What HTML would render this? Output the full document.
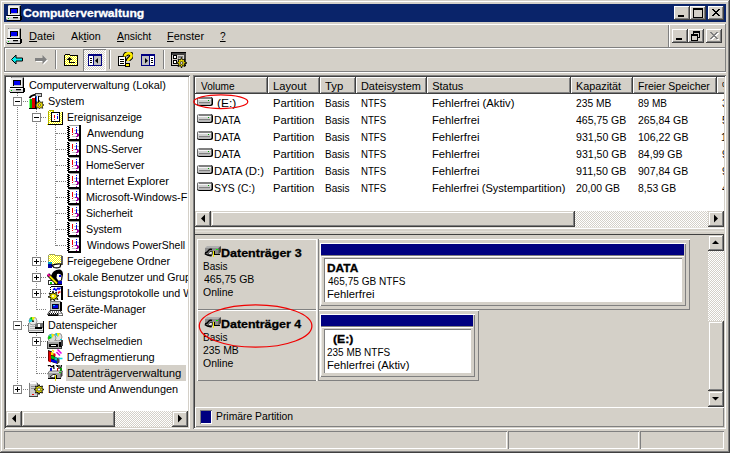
<!DOCTYPE html>
<html lang="de"><head><meta charset="utf-8"><title>Computerverwaltung</title>
<style>
html,body{margin:0;padding:0}
body{width:730px;height:453px;overflow:hidden;position:relative;background:#d4d0c8;font-family:"Liberation Sans",sans-serif;font-size:11px;line-height:13px;color:#000}
div,svg,.t{position:absolute;display:block}
.t{white-space:pre;height:13px;transform-origin:0 0}
u{text-decoration:underline;text-underline-offset:1px}
</style></head>
<body>
<div style="left:0px;top:0px;width:730px;height:453px;background:#d4d0c8"></div>
<svg style="left:0;top:0" width="0" height="0"><defs><pattern id="dy" width="2" height="2" patternUnits="userSpaceOnUse"><rect width="2" height="2" fill="#ffff00"/><rect width="1" height="1" fill="#fff"/><rect x="1" y="1" width="1" height="1" fill="#fff"/></pattern></defs></svg>
<div style="left:0px;top:0px;width:729px;height:1px;background:#d4d0c8"></div>
<div style="left:0px;top:0px;width:1px;height:452px;background:#d4d0c8"></div>
<div style="left:1px;top:1px;width:727px;height:1px;background:#fff"></div>
<div style="left:1px;top:1px;width:1px;height:450px;background:#fff"></div>
<div style="left:729px;top:0px;width:1px;height:453px;background:#404040"></div>
<div style="left:0px;top:452px;width:730px;height:1px;background:#404040"></div>
<div style="left:728px;top:1px;width:1px;height:451px;background:#808080"></div>
<div style="left:1px;top:451px;width:728px;height:1px;background:#808080"></div>
<div style="left:4px;top:4px;width:722px;height:18px;background:#0a246a"></div>
<svg style="left:6px;top:5px" width="16" height="16" viewBox="0 0 16 16" shape-rendering="crispEdges"><rect x="2" y="0" width="13" height="10" fill="#808080"/><rect x="2" y="1" width="11" height="9" fill="#f0f0f0"/>
<rect x="13" y="1" width="1" height="9" fill="#a0a0a0"/><rect x="14" y="1" width="1" height="10" fill="#000"/><rect x="3" y="0" width="11" height="1" fill="#c0c0c0"/>
<rect x="4" y="3" width="8" height="6" fill="#000"/><rect x="5" y="4" width="6" height="4" fill="#0000f0"/><rect x="5" y="8" width="7" height="1" fill="#c0c0c0"/>
<rect x="1" y="10" width="14" height="1" fill="#000"/><rect x="0" y="11" width="14" height="4" fill="#d8d8d8"/><rect x="0" y="11" width="14" height="1" fill="#fff"/>
<rect x="14" y="11" width="2" height="4" fill="#000"/><rect x="1" y="15" width="14" height="1" fill="#000"/><rect x="0" y="14" width="1" height="1" fill="#808080"/>
<rect x="2" y="13" width="1" height="1" fill="#00d000"/><rect x="7" y="12" width="5" height="1" fill="#000"/><rect x="7" y="13" width="5" height="1" fill="#a0a0a0"/></svg>
<span class="t" style="left:22.50px;top:7px;font-weight:bold;-webkit-text-stroke:.3px;color:#fff;transform:scaleX(1.102);">Computerverwaltung</span>
<div style="left:674px;top:6px;width:16px;height:14px;background:#d4d0c8;box-shadow:inset -1px -1px 0 #404040,inset 1px 1px 0 #fff,inset -2px -2px 0 #808080,inset 2px 2px 0 #d4d0c8"></div>
<svg style="left:674px;top:6px" width="16" height="14" shape-rendering="crispEdges"><rect x="4" y="9" width="6" height="2" fill="#000"/></svg>
<div style="left:690px;top:6px;width:16px;height:14px;background:#d4d0c8;box-shadow:inset -1px -1px 0 #404040,inset 1px 1px 0 #fff,inset -2px -2px 0 #808080,inset 2px 2px 0 #d4d0c8"></div>
<svg style="left:690px;top:6px" width="16" height="14" shape-rendering="crispEdges"><rect x="3" y="2" width="9" height="9" fill="none" stroke="#000" stroke-width="1" transform="translate(.5 .5)"/><rect x="3" y="2" width="10" height="2" fill="#000"/></svg>
<div style="left:708px;top:6px;width:16px;height:14px;background:#d4d0c8;box-shadow:inset -1px -1px 0 #404040,inset 1px 1px 0 #fff,inset -2px -2px 0 #808080,inset 2px 2px 0 #d4d0c8"></div>
<svg style="left:708px;top:6px" width="16" height="14" shape-rendering="crispEdges"><rect x="4" y="3" width="2" height="1" fill="#000"/><rect x="10" y="3" width="2" height="1" fill="#000"/><rect x="5" y="4" width="2" height="1" fill="#000"/><rect x="9" y="4" width="2" height="1" fill="#000"/><rect x="6" y="5" width="2" height="1" fill="#000"/><rect x="8" y="5" width="2" height="1" fill="#000"/><rect x="7" y="6" width="2" height="1" fill="#000"/><rect x="7" y="6" width="2" height="1" fill="#000"/><rect x="8" y="7" width="2" height="1" fill="#000"/><rect x="6" y="7" width="2" height="1" fill="#000"/><rect x="9" y="8" width="2" height="1" fill="#000"/><rect x="5" y="8" width="2" height="1" fill="#000"/><rect x="10" y="9" width="2" height="1" fill="#000"/><rect x="4" y="9" width="2" height="1" fill="#000"/></svg>
<div style="left:4px;top:24px;width:722px;height:1px;background:#fff"></div>
<div style="left:4px;top:24px;width:1px;height:23px;background:#fff"></div>
<div style="left:4px;top:47px;width:722px;height:1px;background:#808080"></div>
<div style="left:668px;top:25px;width:1px;height:22px;background:#808080"></div>
<div style="left:669px;top:25px;width:1px;height:22px;background:#fff"></div>
<div style="left:725px;top:24px;width:1px;height:23px;background:#808080"></div>
<svg style="left:6px;top:28px" width="16" height="16" viewBox="0 0 16 16" shape-rendering="crispEdges"><rect x="2" y="0" width="13" height="10" fill="#808080"/><rect x="2" y="1" width="11" height="9" fill="#f0f0f0"/>
<rect x="13" y="1" width="1" height="9" fill="#a0a0a0"/><rect x="14" y="1" width="1" height="10" fill="#000"/><rect x="3" y="0" width="11" height="1" fill="#c0c0c0"/>
<rect x="4" y="3" width="8" height="6" fill="#000"/><rect x="5" y="4" width="6" height="4" fill="#0000f0"/><rect x="5" y="8" width="7" height="1" fill="#c0c0c0"/>
<rect x="1" y="10" width="14" height="1" fill="#000"/><rect x="0" y="11" width="14" height="4" fill="#d8d8d8"/><rect x="0" y="11" width="14" height="1" fill="#fff"/>
<rect x="14" y="11" width="2" height="4" fill="#000"/><rect x="1" y="15" width="14" height="1" fill="#000"/><rect x="0" y="14" width="1" height="1" fill="#808080"/>
<rect x="2" y="13" width="1" height="1" fill="#00d000"/><rect x="7" y="12" width="5" height="1" fill="#000"/><rect x="7" y="13" width="5" height="1" fill="#a0a0a0"/></svg>
<span class="t" style="left:29.10px;top:30px;"><u>D</u>atei</span>
<span class="t" style="left:70.95px;top:30px;transform:scaleX(0.973);">Ak<u>t</u>ion</span>
<span class="t" style="left:116.95px;top:30px;transform:scaleX(0.946);"><u>A</u>nsicht</span>
<span class="t" style="left:167.11px;top:30px;transform:scaleX(0.993);"><u>F</u>enster</span>
<span class="t" style="left:220.09px;top:30px;transform:scaleX(0.914);"><u>?</u></span>
<div style="left:672px;top:29px;width:16px;height:14px;background:#d4d0c8;box-shadow:inset -1px -1px 0 #404040,inset 1px 1px 0 #fff,inset -2px -2px 0 #808080,inset 2px 2px 0 #d4d0c8"></div>
<svg style="left:672px;top:29px" width="16" height="14" shape-rendering="crispEdges"><rect x="4" y="9" width="6" height="2" fill="#000"/></svg>
<div style="left:688px;top:29px;width:16px;height:14px;background:#d4d0c8;box-shadow:inset -1px -1px 0 #404040,inset 1px 1px 0 #fff,inset -2px -2px 0 #808080,inset 2px 2px 0 #d4d0c8"></div>
<svg style="left:688px;top:29px" width="16" height="14" shape-rendering="crispEdges"><rect x="5" y="2" width="6" height="6" fill="none" stroke="#000" transform="translate(.5 .5)"/><rect x="5" y="2" width="7" height="2" fill="#000"/><rect x="3" y="5" width="6" height="6" fill="#d4d0c8" stroke="#000" transform="translate(.5 .5)"/><rect x="3" y="5" width="7" height="2" fill="#000"/></svg>
<div style="left:706px;top:29px;width:16px;height:14px;background:#d4d0c8;box-shadow:inset -1px -1px 0 #404040,inset 1px 1px 0 #fff,inset -2px -2px 0 #808080,inset 2px 2px 0 #d4d0c8"></div>
<svg style="left:706px;top:29px" width="16" height="14" shape-rendering="crispEdges"><rect transform="translate(1 1)" x="4" y="3" width="2" height="1" fill="#fff"/><rect transform="translate(1 1)" x="10" y="3" width="2" height="1" fill="#fff"/><rect transform="translate(1 1)" x="5" y="4" width="2" height="1" fill="#fff"/><rect transform="translate(1 1)" x="9" y="4" width="2" height="1" fill="#fff"/><rect transform="translate(1 1)" x="6" y="5" width="2" height="1" fill="#fff"/><rect transform="translate(1 1)" x="8" y="5" width="2" height="1" fill="#fff"/><rect transform="translate(1 1)" x="7" y="6" width="2" height="1" fill="#fff"/><rect transform="translate(1 1)" x="7" y="6" width="2" height="1" fill="#fff"/><rect transform="translate(1 1)" x="8" y="7" width="2" height="1" fill="#fff"/><rect transform="translate(1 1)" x="6" y="7" width="2" height="1" fill="#fff"/><rect transform="translate(1 1)" x="9" y="8" width="2" height="1" fill="#fff"/><rect transform="translate(1 1)" x="5" y="8" width="2" height="1" fill="#fff"/><rect transform="translate(1 1)" x="10" y="9" width="2" height="1" fill="#fff"/><rect transform="translate(1 1)" x="4" y="9" width="2" height="1" fill="#fff"/><rect x="4" y="3" width="2" height="1" fill="#808080"/><rect x="10" y="3" width="2" height="1" fill="#808080"/><rect x="5" y="4" width="2" height="1" fill="#808080"/><rect x="9" y="4" width="2" height="1" fill="#808080"/><rect x="6" y="5" width="2" height="1" fill="#808080"/><rect x="8" y="5" width="2" height="1" fill="#808080"/><rect x="7" y="6" width="2" height="1" fill="#808080"/><rect x="7" y="6" width="2" height="1" fill="#808080"/><rect x="8" y="7" width="2" height="1" fill="#808080"/><rect x="6" y="7" width="2" height="1" fill="#808080"/><rect x="9" y="8" width="2" height="1" fill="#808080"/><rect x="5" y="8" width="2" height="1" fill="#808080"/><rect x="10" y="9" width="2" height="1" fill="#808080"/><rect x="4" y="9" width="2" height="1" fill="#808080"/></svg>
<div style="left:4px;top:48px;width:722px;height:1px;background:#fff"></div>
<div style="left:4px;top:48px;width:1px;height:23px;background:#808080"></div>
<div style="left:5px;top:49px;width:1px;height:22px;background:#fff"></div>
<div style="left:4px;top:71px;width:722px;height:1px;background:#808080"></div>
<div style="left:4px;top:72px;width:722px;height:1px;background:#fff"></div>
<div style="left:725px;top:48px;width:1px;height:24px;background:#808080"></div>
<svg style="left:10px;top:52px" width="16" height="16" viewBox="0 0 16 16" shape-rendering="crispEdges"><path d="M1.5 7.500L6 3v3h6.500v3H6v3z" fill="#00f0f0" stroke="#000" stroke-width="1" shape-rendering="auto"/></svg>
<svg style="left:33px;top:52px" width="16" height="16" viewBox="0 0 16 16" shape-rendering="crispEdges"><path d="M15 8.500L10.500 4v3H3v3h7.500v3z" fill="#fff" shape-rendering="auto"/><path d="M14 7.500L9.500 3v3H2v3h7.500v3z" fill="#808080" shape-rendering="auto"/></svg>
<div style="left:55px;top:50px;width:1px;height:19px;background:#808080"></div>
<div style="left:56px;top:50px;width:1px;height:19px;background:#fff"></div>
<svg style="left:63px;top:52px" width="16" height="16" viewBox="0 0 16 16" shape-rendering="crispEdges"><path d="M1.500 13.500v-10l1-1.500h4l1 1.500h7v10z" fill="url(#dy)" stroke="#000"/><path d="M12 10.500H6.500V6" stroke="#000" stroke-width="1.600" fill="none"/><path d="M3.500 8l3-3 3 3z" fill="#000" shape-rendering="auto"/></svg>
<div style="left:83px;top:49px;width:23px;height:22px;background:repeating-conic-gradient(#fff 0% 25%,#d4d0c8 0% 50%) 0 0/2px 2px;box-shadow:inset 1px 1px 0 #808080,inset -1px -1px 0 #fff"></div>
<svg style="left:88px;top:54px" width="14" height="12" viewBox="0 0 14 12" shape-rendering="crispEdges"><rect x="0" y="0" width="14" height="12" fill="#000080"/><rect x="1" y="2" width="4" height="9" fill="#fff"/><rect x="6" y="2" width="7" height="9" fill="#c0c0c0"/><rect x="2" y="4" width="2" height="1" fill="#000"/><rect x="2" y="6" width="2" height="1" fill="#000"/><rect x="2" y="8" width="2" height="1" fill="#000"/><path d="M10 4v5.500l-3-2.750z" fill="#000" shape-rendering="auto"/></svg>
<div style="left:109px;top:50px;width:1px;height:19px;background:#808080"></div>
<div style="left:110px;top:50px;width:1px;height:19px;background:#fff"></div>
<svg style="left:117px;top:52px" width="16" height="16" viewBox="0 0 16 16" shape-rendering="crispEdges"><rect x="1.500" y="4.500" width="7" height="9" fill="#fff" stroke="#000"/><rect x="3" y="7" width="4" height="1" fill="#000"/><rect x="3" y="9" width="4" height="1" fill="#000"/><rect x="3" y="11" width="4" height="1" fill="#000"/>
<path d="M8 4.500c-.5-4 7-4.500 6.500-.5-.3 2.500-3.500 2.500-3.500 5" fill="none" stroke="#000" stroke-width="4.600" shape-rendering="auto"/><path d="M8 4.500c-.5-4 7-4.500 6.500-.5-.3 2.500-3.500 2.500-3.500 5" fill="none" stroke="#ffee00" stroke-width="2.600" shape-rendering="auto"/><rect x="8.500" y="11.500" width="4" height="2.500" fill="#ffee00" stroke="#000"/></svg>
<svg style="left:141px;top:54px" width="14" height="12" viewBox="0 0 14 12" shape-rendering="crispEdges"><rect x="0" y="0" width="14" height="12" fill="#000080"/><rect x="1" y="2" width="7" height="9" fill="#c0c0c0"/><rect x="9" y="2" width="4" height="9" fill="#fff"/><rect x="10" y="4" width="2" height="1" fill="#000"/><rect x="10" y="6" width="2" height="1" fill="#000"/><rect x="10" y="8" width="2" height="1" fill="#000"/><path d="M4 4v5.500l3-2.750z" fill="#000" shape-rendering="auto"/></svg>
<div style="left:163px;top:50px;width:1px;height:19px;background:#808080"></div>
<div style="left:164px;top:50px;width:1px;height:19px;background:#fff"></div>
<svg style="left:171px;top:52px" width="17" height="16" viewBox="0 0 17 16" shape-rendering="crispEdges"><rect x="0.500" y="0.500" width="14" height="13" fill="#d4d0c8" stroke="#000"/><rect x="1" y="1" width="13" height="1.500" fill="#404040"/><rect x="13" y="1" width="1.500" height="12" fill="#404040"/><rect x="2.500" y="3.500" width="3" height="3" fill="#fff" stroke="#000" stroke-width="1"/><rect x="2.500" y="8.500" width="3" height="3" fill="#fff" stroke="#000"/><rect x="7" y="4" width="5" height="2" fill="#808080"/><rect x="7" y="9" width="3" height="1" fill="#404040"/>
<path d="M10.500 5.500l1 2.500 2.500-1-1 2.500 3 1.500-3 1 1 2.500-2.500-1-1 2.500-1-2.500-2.500 1 1-2.500-3-1 3-1.500-1-2.500 2.500 1z" fill="#ffee00" stroke="#000" stroke-width=".9" shape-rendering="auto"/><circle cx="10.500" cy="11" r="1.500" fill="#d4d0c8" stroke="#000" stroke-width=".7" shape-rendering="auto"/></svg>
<div style="left:4px;top:75px;width:186px;height:354px;background:#fff;box-shadow:inset 1px 1px 0 #808080,inset -1px -1px 0 #fff,inset 2px 2px 0 #404040,inset -2px -2px 0 #d4d0c8"></div>
<div style="left:6px;top:77px;width:182px;height:334px;overflow:hidden">
<div style="left:-6px;top:-77px;width:730px;height:453px">
<div style="left:17px;top:90px;width:1px;height:299px;background:repeating-linear-gradient(to bottom,#808080 0 1px,transparent 1px 2px);background-position:0 1px"></div>
<div style="left:36px;top:107px;width:1px;height:203px;background:repeating-linear-gradient(to bottom,#808080 0 1px,transparent 1px 2px);background-position:0 0px"></div>
<div style="left:55px;top:123px;width:1px;height:123px;background:repeating-linear-gradient(to bottom,#808080 0 1px,transparent 1px 2px);background-position:0 0px"></div>
<div style="left:36px;top:331px;width:1px;height:43px;background:repeating-linear-gradient(to bottom,#808080 0 1px,transparent 1px 2px);background-position:0 0px"></div>
<svg style="left:9px;top:77px" width="16" height="16" viewBox="0 0 16 16" shape-rendering="crispEdges"><rect x="2" y="0" width="13" height="10" fill="#808080"/><rect x="2" y="1" width="11" height="9" fill="#f0f0f0"/>
<rect x="13" y="1" width="1" height="9" fill="#a0a0a0"/><rect x="14" y="1" width="1" height="10" fill="#000"/><rect x="3" y="0" width="11" height="1" fill="#c0c0c0"/>
<rect x="4" y="3" width="8" height="6" fill="#000"/><rect x="5" y="4" width="6" height="4" fill="#0000f0"/><rect x="5" y="8" width="7" height="1" fill="#c0c0c0"/>
<rect x="1" y="10" width="14" height="1" fill="#000"/><rect x="0" y="11" width="14" height="4" fill="#d8d8d8"/><rect x="0" y="11" width="14" height="1" fill="#fff"/>
<rect x="14" y="11" width="2" height="4" fill="#000"/><rect x="1" y="15" width="14" height="1" fill="#000"/><rect x="0" y="14" width="1" height="1" fill="#808080"/>
<rect x="2" y="13" width="1" height="1" fill="#00d000"/><rect x="7" y="12" width="5" height="1" fill="#000"/><rect x="7" y="13" width="5" height="1" fill="#a0a0a0"/></svg>
<span class="t" style="left:29.46px;top:79px;transform:scaleX(0.990);">Computerverwaltung (Lokal)</span>
<div style="left:18px;top:101px;width:10px;height:1px;background:repeating-linear-gradient(to right,#808080 0 1px,transparent 1px 2px);background-position:1px 0"></div>
<div style="left:13px;top:97px;width:9px;height:9px;background:#fff;box-shadow:inset 0 0 0 1px #808080"></div>
<div style="left:15px;top:101px;width:5px;height:1px;background:#000"></div>
<svg style="left:28px;top:93px" width="16" height="16" viewBox="0 0 16 16" shape-rendering="crispEdges"><path d="M1.500 5q3-4.500 11-3" stroke="#000" stroke-width="1.800" fill="none" shape-rendering="auto"/><rect x="7.500" y="0.500" width="6" height="3" fill="#d0d0d0" stroke="#404040"/>
<rect x="1" y="6" width="3" height="9" fill="#00b800"/><rect x="1" y="6" width="1" height="9" fill="#80ff80"/><rect x="4" y="5" width="3" height="10" fill="#e00000"/><rect x="7" y="4" width="1" height="11" fill="#000"/>
<rect x="8" y="3" width="2" height="9" fill="#2060ff"/><rect x="9" y="3" width="1" height="6" fill="#fff"/><rect x="10" y="3" width="1" height="8" fill="#000"/><rect x="1" y="15" width="8" height="1" fill="#000"/>
<path d="M11.500 7.500l1 2 2.300-.7-.7 2.200 2 1-2 1 .7 2.300-2.300-.7-1 1.400-1-1.400-2.300.7.700-2.300-2-1 2-1-.7-2.200 2.300.7z" fill="#f0e000" stroke="#000" stroke-width=".7" shape-rendering="auto"/><circle cx="11.500" cy="12" r="1.100" fill="#fff" stroke="#000" stroke-width=".5" shape-rendering="auto"/></svg>
<span class="t" style="left:48.01px;top:95px;transform:scaleX(0.987);">System</span>
<div style="left:37px;top:117px;width:10px;height:1px;background:repeating-linear-gradient(to right,#808080 0 1px,transparent 1px 2px);background-position:0px 0"></div>
<div style="left:32px;top:113px;width:9px;height:9px;background:#fff;box-shadow:inset 0 0 0 1px #808080"></div>
<div style="left:34px;top:117px;width:5px;height:1px;background:#000"></div>
<svg style="left:47px;top:109px" width="16" height="16" viewBox="0 0 16 16" shape-rendering="crispEdges"><path d="M1 2.500l1-2h4l1 2h8.500v13h-15z" fill="url(#dy)"/><path d="M1.500 15.500v-13l1-1.500h3.500l1 1.500" fill="none" stroke="#b0b000" stroke-width="1"/>
<rect x="1" y="15" width="15" height="1" fill="#000"/><rect x="15" y="3" width="1" height="13" fill="#000"/>
<rect x="4.500" y="3.500" width="8" height="9" fill="#fff" stroke="#000" stroke-width="1.300"/>
<rect x="6.500" y="6" width="1.300" height="3" fill="#f00000"/><rect x="6.500" y="10" width="1.300" height="1" fill="#f00000"/><rect x="9.500" y="5" width="1.300" height="1" fill="#0000f0"/><rect x="9.500" y="7" width="1.300" height="3" fill="#0000f0"/></svg>
<span class="t" style="left:66.74px;top:111px;transform:scaleX(0.957);">Ereignisanzeige</span>
<div style="left:56px;top:133px;width:11px;height:1px;background:repeating-linear-gradient(to right,#808080 0 1px,transparent 1px 2px);background-position:1px 0"></div>
<svg style="left:66px;top:125px" width="16" height="16" viewBox="0 0 16 16" shape-rendering="crispEdges"><rect x="3" y="0" width="10" height="14" fill="#fff"/><rect x="3" y="0" width="11" height="1" fill="#a0a0a0"/>
<rect x="13" y="0" width="1.500" height="15" fill="#000"/><rect x="2" y="14" width="12.500" height="1.500" fill="#000"/><rect x="1" y="1" width="2" height="1" fill="#000"/><rect x="2" y="2" width="2" height="1" fill="#000"/><rect x="1" y="3" width="2" height="1" fill="#000"/><rect x="2" y="4" width="2" height="1" fill="#000"/><rect x="1" y="5" width="2" height="1" fill="#000"/><rect x="2" y="6" width="2" height="1" fill="#000"/><rect x="1" y="7" width="2" height="1" fill="#000"/><rect x="2" y="8" width="2" height="1" fill="#000"/><rect x="1" y="9" width="2" height="1" fill="#000"/><rect x="2" y="10" width="2" height="1" fill="#000"/><rect x="1" y="11" width="2" height="1" fill="#000"/><rect x="2" y="12" width="2" height="1" fill="#000"/><rect x="1" y="13" width="2" height="1" fill="#000"/>
<rect x="8" y="5" width="5" height="1" fill="#c8c8c8"/><rect x="7" y="8" width="6" height="1" fill="#c8c8c8"/><rect x="6" y="11" width="7" height="1" fill="#c8c8c8"/>
<rect x="6" y="3" width="1.300" height="5" fill="#f00000"/><rect x="6" y="9" width="1.300" height="1" fill="#f00000"/>
<rect x="10" y="2" width="1.300" height="1" fill="#0000f0"/><rect x="10" y="4" width="1.300" height="4" fill="#0000f0"/>
<rect x="9" y="8" width="3" height="1" fill="#a000a0"/><rect x="11" y="9" width="1.500" height="2" fill="#a000a0"/><rect x="10" y="11" width="1.500" height="1" fill="#a000a0"/><rect x="10" y="13" width="1" height="1" fill="#a000a0"/></svg>
<span class="t" style="left:86.85px;top:127px;transform:scaleX(0.978);">Anwendung</span>
<div style="left:56px;top:149px;width:11px;height:1px;background:repeating-linear-gradient(to right,#808080 0 1px,transparent 1px 2px);background-position:1px 0"></div>
<svg style="left:66px;top:141px" width="16" height="16" viewBox="0 0 16 16" shape-rendering="crispEdges"><rect x="3" y="0" width="10" height="14" fill="#fff"/><rect x="3" y="0" width="11" height="1" fill="#a0a0a0"/>
<rect x="13" y="0" width="1.500" height="15" fill="#000"/><rect x="2" y="14" width="12.500" height="1.500" fill="#000"/><rect x="1" y="1" width="2" height="1" fill="#000"/><rect x="2" y="2" width="2" height="1" fill="#000"/><rect x="1" y="3" width="2" height="1" fill="#000"/><rect x="2" y="4" width="2" height="1" fill="#000"/><rect x="1" y="5" width="2" height="1" fill="#000"/><rect x="2" y="6" width="2" height="1" fill="#000"/><rect x="1" y="7" width="2" height="1" fill="#000"/><rect x="2" y="8" width="2" height="1" fill="#000"/><rect x="1" y="9" width="2" height="1" fill="#000"/><rect x="2" y="10" width="2" height="1" fill="#000"/><rect x="1" y="11" width="2" height="1" fill="#000"/><rect x="2" y="12" width="2" height="1" fill="#000"/><rect x="1" y="13" width="2" height="1" fill="#000"/>
<rect x="8" y="5" width="5" height="1" fill="#c8c8c8"/><rect x="7" y="8" width="6" height="1" fill="#c8c8c8"/><rect x="6" y="11" width="7" height="1" fill="#c8c8c8"/>
<rect x="6" y="3" width="1.300" height="5" fill="#f00000"/><rect x="6" y="9" width="1.300" height="1" fill="#f00000"/>
<rect x="10" y="2" width="1.300" height="1" fill="#0000f0"/><rect x="10" y="4" width="1.300" height="4" fill="#0000f0"/>
<rect x="9" y="8" width="3" height="1" fill="#a000a0"/><rect x="11" y="9" width="1.500" height="2" fill="#a000a0"/><rect x="10" y="11" width="1.500" height="1" fill="#a000a0"/><rect x="10" y="13" width="1" height="1" fill="#a000a0"/></svg>
<span class="t" style="left:86.05px;top:143px;transform:scaleX(0.943);">DNS-Server</span>
<div style="left:56px;top:165px;width:11px;height:1px;background:repeating-linear-gradient(to right,#808080 0 1px,transparent 1px 2px);background-position:1px 0"></div>
<svg style="left:66px;top:157px" width="16" height="16" viewBox="0 0 16 16" shape-rendering="crispEdges"><rect x="3" y="0" width="10" height="14" fill="#fff"/><rect x="3" y="0" width="11" height="1" fill="#a0a0a0"/>
<rect x="13" y="0" width="1.500" height="15" fill="#000"/><rect x="2" y="14" width="12.500" height="1.500" fill="#000"/><rect x="1" y="1" width="2" height="1" fill="#000"/><rect x="2" y="2" width="2" height="1" fill="#000"/><rect x="1" y="3" width="2" height="1" fill="#000"/><rect x="2" y="4" width="2" height="1" fill="#000"/><rect x="1" y="5" width="2" height="1" fill="#000"/><rect x="2" y="6" width="2" height="1" fill="#000"/><rect x="1" y="7" width="2" height="1" fill="#000"/><rect x="2" y="8" width="2" height="1" fill="#000"/><rect x="1" y="9" width="2" height="1" fill="#000"/><rect x="2" y="10" width="2" height="1" fill="#000"/><rect x="1" y="11" width="2" height="1" fill="#000"/><rect x="2" y="12" width="2" height="1" fill="#000"/><rect x="1" y="13" width="2" height="1" fill="#000"/>
<rect x="8" y="5" width="5" height="1" fill="#c8c8c8"/><rect x="7" y="8" width="6" height="1" fill="#c8c8c8"/><rect x="6" y="11" width="7" height="1" fill="#c8c8c8"/>
<rect x="6" y="3" width="1.300" height="5" fill="#f00000"/><rect x="6" y="9" width="1.300" height="1" fill="#f00000"/>
<rect x="10" y="2" width="1.300" height="1" fill="#0000f0"/><rect x="10" y="4" width="1.300" height="4" fill="#0000f0"/>
<rect x="9" y="8" width="3" height="1" fill="#a000a0"/><rect x="11" y="9" width="1.500" height="2" fill="#a000a0"/><rect x="10" y="11" width="1.500" height="1" fill="#a000a0"/><rect x="10" y="13" width="1" height="1" fill="#a000a0"/></svg>
<span class="t" style="left:86.05px;top:159px;transform:scaleX(0.947);">HomeServer</span>
<div style="left:56px;top:181px;width:11px;height:1px;background:repeating-linear-gradient(to right,#808080 0 1px,transparent 1px 2px);background-position:1px 0"></div>
<svg style="left:66px;top:173px" width="16" height="16" viewBox="0 0 16 16" shape-rendering="crispEdges"><rect x="3" y="0" width="10" height="14" fill="#fff"/><rect x="3" y="0" width="11" height="1" fill="#a0a0a0"/>
<rect x="13" y="0" width="1.500" height="15" fill="#000"/><rect x="2" y="14" width="12.500" height="1.500" fill="#000"/><rect x="1" y="1" width="2" height="1" fill="#000"/><rect x="2" y="2" width="2" height="1" fill="#000"/><rect x="1" y="3" width="2" height="1" fill="#000"/><rect x="2" y="4" width="2" height="1" fill="#000"/><rect x="1" y="5" width="2" height="1" fill="#000"/><rect x="2" y="6" width="2" height="1" fill="#000"/><rect x="1" y="7" width="2" height="1" fill="#000"/><rect x="2" y="8" width="2" height="1" fill="#000"/><rect x="1" y="9" width="2" height="1" fill="#000"/><rect x="2" y="10" width="2" height="1" fill="#000"/><rect x="1" y="11" width="2" height="1" fill="#000"/><rect x="2" y="12" width="2" height="1" fill="#000"/><rect x="1" y="13" width="2" height="1" fill="#000"/>
<rect x="8" y="5" width="5" height="1" fill="#c8c8c8"/><rect x="7" y="8" width="6" height="1" fill="#c8c8c8"/><rect x="6" y="11" width="7" height="1" fill="#c8c8c8"/>
<rect x="6" y="3" width="1.300" height="5" fill="#f00000"/><rect x="6" y="9" width="1.300" height="1" fill="#f00000"/>
<rect x="10" y="2" width="1.300" height="1" fill="#0000f0"/><rect x="10" y="4" width="1.300" height="4" fill="#0000f0"/>
<rect x="9" y="8" width="3" height="1" fill="#a000a0"/><rect x="11" y="9" width="1.500" height="2" fill="#a000a0"/><rect x="10" y="11" width="1.500" height="1" fill="#a000a0"/><rect x="10" y="13" width="1" height="1" fill="#a000a0"/></svg>
<span class="t" style="left:85.88px;top:175px;transform:scaleX(1.022);">Internet Explorer</span>
<div style="left:56px;top:197px;width:11px;height:1px;background:repeating-linear-gradient(to right,#808080 0 1px,transparent 1px 2px);background-position:1px 0"></div>
<svg style="left:66px;top:189px" width="16" height="16" viewBox="0 0 16 16" shape-rendering="crispEdges"><rect x="3" y="0" width="10" height="14" fill="#fff"/><rect x="3" y="0" width="11" height="1" fill="#a0a0a0"/>
<rect x="13" y="0" width="1.500" height="15" fill="#000"/><rect x="2" y="14" width="12.500" height="1.500" fill="#000"/><rect x="1" y="1" width="2" height="1" fill="#000"/><rect x="2" y="2" width="2" height="1" fill="#000"/><rect x="1" y="3" width="2" height="1" fill="#000"/><rect x="2" y="4" width="2" height="1" fill="#000"/><rect x="1" y="5" width="2" height="1" fill="#000"/><rect x="2" y="6" width="2" height="1" fill="#000"/><rect x="1" y="7" width="2" height="1" fill="#000"/><rect x="2" y="8" width="2" height="1" fill="#000"/><rect x="1" y="9" width="2" height="1" fill="#000"/><rect x="2" y="10" width="2" height="1" fill="#000"/><rect x="1" y="11" width="2" height="1" fill="#000"/><rect x="2" y="12" width="2" height="1" fill="#000"/><rect x="1" y="13" width="2" height="1" fill="#000"/>
<rect x="8" y="5" width="5" height="1" fill="#c8c8c8"/><rect x="7" y="8" width="6" height="1" fill="#c8c8c8"/><rect x="6" y="11" width="7" height="1" fill="#c8c8c8"/>
<rect x="6" y="3" width="1.300" height="5" fill="#f00000"/><rect x="6" y="9" width="1.300" height="1" fill="#f00000"/>
<rect x="10" y="2" width="1.300" height="1" fill="#0000f0"/><rect x="10" y="4" width="1.300" height="4" fill="#0000f0"/>
<rect x="9" y="8" width="3" height="1" fill="#a000a0"/><rect x="11" y="9" width="1.500" height="2" fill="#a000a0"/><rect x="10" y="11" width="1.500" height="1" fill="#a000a0"/><rect x="10" y="13" width="1" height="1" fill="#a000a0"/></svg>
<span class="t" style="left:86.02px;top:191px;transform:scaleX(0.980);">Microsoft-Windows-F</span>
<div style="left:56px;top:213px;width:11px;height:1px;background:repeating-linear-gradient(to right,#808080 0 1px,transparent 1px 2px);background-position:1px 0"></div>
<svg style="left:66px;top:205px" width="16" height="16" viewBox="0 0 16 16" shape-rendering="crispEdges"><rect x="3" y="0" width="10" height="14" fill="#fff"/><rect x="3" y="0" width="11" height="1" fill="#a0a0a0"/>
<rect x="13" y="0" width="1.500" height="15" fill="#000"/><rect x="2" y="14" width="12.500" height="1.500" fill="#000"/><rect x="1" y="1" width="2" height="1" fill="#000"/><rect x="2" y="2" width="2" height="1" fill="#000"/><rect x="1" y="3" width="2" height="1" fill="#000"/><rect x="2" y="4" width="2" height="1" fill="#000"/><rect x="1" y="5" width="2" height="1" fill="#000"/><rect x="2" y="6" width="2" height="1" fill="#000"/><rect x="1" y="7" width="2" height="1" fill="#000"/><rect x="2" y="8" width="2" height="1" fill="#000"/><rect x="1" y="9" width="2" height="1" fill="#000"/><rect x="2" y="10" width="2" height="1" fill="#000"/><rect x="1" y="11" width="2" height="1" fill="#000"/><rect x="2" y="12" width="2" height="1" fill="#000"/><rect x="1" y="13" width="2" height="1" fill="#000"/>
<rect x="8" y="5" width="5" height="1" fill="#c8c8c8"/><rect x="7" y="8" width="6" height="1" fill="#c8c8c8"/><rect x="6" y="11" width="7" height="1" fill="#c8c8c8"/>
<rect x="6" y="3" width="1.300" height="5" fill="#f00000"/><rect x="6" y="9" width="1.300" height="1" fill="#f00000"/>
<rect x="10" y="2" width="1.300" height="1" fill="#0000f0"/><rect x="10" y="4" width="1.300" height="4" fill="#0000f0"/>
<rect x="9" y="8" width="3" height="1" fill="#a000a0"/><rect x="11" y="9" width="1.500" height="2" fill="#a000a0"/><rect x="10" y="11" width="1.500" height="1" fill="#a000a0"/><rect x="10" y="13" width="1" height="1" fill="#a000a0"/></svg>
<span class="t" style="left:86.42px;top:207px;transform:scaleX(0.953);">Sicherheit</span>
<div style="left:56px;top:229px;width:11px;height:1px;background:repeating-linear-gradient(to right,#808080 0 1px,transparent 1px 2px);background-position:1px 0"></div>
<svg style="left:66px;top:221px" width="16" height="16" viewBox="0 0 16 16" shape-rendering="crispEdges"><rect x="3" y="0" width="10" height="14" fill="#fff"/><rect x="3" y="0" width="11" height="1" fill="#a0a0a0"/>
<rect x="13" y="0" width="1.500" height="15" fill="#000"/><rect x="2" y="14" width="12.500" height="1.500" fill="#000"/><rect x="1" y="1" width="2" height="1" fill="#000"/><rect x="2" y="2" width="2" height="1" fill="#000"/><rect x="1" y="3" width="2" height="1" fill="#000"/><rect x="2" y="4" width="2" height="1" fill="#000"/><rect x="1" y="5" width="2" height="1" fill="#000"/><rect x="2" y="6" width="2" height="1" fill="#000"/><rect x="1" y="7" width="2" height="1" fill="#000"/><rect x="2" y="8" width="2" height="1" fill="#000"/><rect x="1" y="9" width="2" height="1" fill="#000"/><rect x="2" y="10" width="2" height="1" fill="#000"/><rect x="1" y="11" width="2" height="1" fill="#000"/><rect x="2" y="12" width="2" height="1" fill="#000"/><rect x="1" y="13" width="2" height="1" fill="#000"/>
<rect x="8" y="5" width="5" height="1" fill="#c8c8c8"/><rect x="7" y="8" width="6" height="1" fill="#c8c8c8"/><rect x="6" y="11" width="7" height="1" fill="#c8c8c8"/>
<rect x="6" y="3" width="1.300" height="5" fill="#f00000"/><rect x="6" y="9" width="1.300" height="1" fill="#f00000"/>
<rect x="10" y="2" width="1.300" height="1" fill="#0000f0"/><rect x="10" y="4" width="1.300" height="4" fill="#0000f0"/>
<rect x="9" y="8" width="3" height="1" fill="#a000a0"/><rect x="11" y="9" width="1.500" height="2" fill="#a000a0"/><rect x="10" y="11" width="1.500" height="1" fill="#a000a0"/><rect x="10" y="13" width="1" height="1" fill="#a000a0"/></svg>
<span class="t" style="left:86.41px;top:223px;transform:scaleX(0.973);">System</span>
<div style="left:56px;top:245px;width:11px;height:1px;background:repeating-linear-gradient(to right,#808080 0 1px,transparent 1px 2px);background-position:1px 0"></div>
<svg style="left:66px;top:237px" width="16" height="16" viewBox="0 0 16 16" shape-rendering="crispEdges"><rect x="3" y="0" width="10" height="14" fill="#fff"/><rect x="3" y="0" width="11" height="1" fill="#a0a0a0"/>
<rect x="13" y="0" width="1.500" height="15" fill="#000"/><rect x="2" y="14" width="12.500" height="1.500" fill="#000"/><rect x="1" y="1" width="2" height="1" fill="#000"/><rect x="2" y="2" width="2" height="1" fill="#000"/><rect x="1" y="3" width="2" height="1" fill="#000"/><rect x="2" y="4" width="2" height="1" fill="#000"/><rect x="1" y="5" width="2" height="1" fill="#000"/><rect x="2" y="6" width="2" height="1" fill="#000"/><rect x="1" y="7" width="2" height="1" fill="#000"/><rect x="2" y="8" width="2" height="1" fill="#000"/><rect x="1" y="9" width="2" height="1" fill="#000"/><rect x="2" y="10" width="2" height="1" fill="#000"/><rect x="1" y="11" width="2" height="1" fill="#000"/><rect x="2" y="12" width="2" height="1" fill="#000"/><rect x="1" y="13" width="2" height="1" fill="#000"/>
<rect x="8" y="5" width="5" height="1" fill="#c8c8c8"/><rect x="7" y="8" width="6" height="1" fill="#c8c8c8"/><rect x="6" y="11" width="7" height="1" fill="#c8c8c8"/>
<rect x="6" y="3" width="1.300" height="5" fill="#f00000"/><rect x="6" y="9" width="1.300" height="1" fill="#f00000"/>
<rect x="10" y="2" width="1.300" height="1" fill="#0000f0"/><rect x="10" y="4" width="1.300" height="4" fill="#0000f0"/>
<rect x="9" y="8" width="3" height="1" fill="#a000a0"/><rect x="11" y="9" width="1.500" height="2" fill="#a000a0"/><rect x="10" y="11" width="1.500" height="1" fill="#a000a0"/><rect x="10" y="13" width="1" height="1" fill="#a000a0"/></svg>
<span class="t" style="left:86.85px;top:239px;transform:scaleX(0.949);">Windows PowerShell</span>
<div style="left:37px;top:261px;width:10px;height:1px;background:repeating-linear-gradient(to right,#808080 0 1px,transparent 1px 2px);background-position:0px 0"></div>
<div style="left:32px;top:257px;width:9px;height:9px;background:#fff;box-shadow:inset 0 0 0 1px #808080"></div>
<div style="left:34px;top:261px;width:5px;height:1px;background:#000"></div>
<div style="left:36px;top:259px;width:1px;height:5px;background:#000"></div>
<svg style="left:47px;top:253px" width="16" height="16" viewBox="0 0 16 16" shape-rendering="crispEdges"><path d="M1.500 11.500v-9l1.500-1.500h4l1.500 1.500h6v9z" fill="url(#dy)" stroke="#a0a060" stroke-width="1"/><rect x="14" y="3" width="1.500" height="9" fill="#606060"/>
<rect x="1" y="9" width="4" height="6" fill="#0000a0"/><rect x="1" y="9" width="4" height="1.500" fill="#00a0c0"/>
<path d="M5 12.500q3-2 9-1.500l-1 3q-3 1.500-6 .5z" fill="#fff" stroke="#000" stroke-width="1.200" shape-rendering="auto"/></svg>
<span class="t" style="left:66.72px;top:255px;transform:scaleX(0.980);">Freigegebene Ordner</span>
<div style="left:37px;top:277px;width:10px;height:1px;background:repeating-linear-gradient(to right,#808080 0 1px,transparent 1px 2px);background-position:0px 0"></div>
<div style="left:32px;top:273px;width:9px;height:9px;background:#fff;box-shadow:inset 0 0 0 1px #808080"></div>
<div style="left:34px;top:277px;width:5px;height:1px;background:#000"></div>
<div style="left:36px;top:275px;width:1px;height:5px;background:#000"></div>
<svg style="left:47px;top:269px" width="16" height="16" viewBox="0 0 16 16" shape-rendering="crispEdges"><path d="M4 7q2-7 9-6.500 3 1 3 5l-1 6-4 1-3-1z" fill="#000" shape-rendering="auto"/>
<path d="M10 5q3-1 4.500 1.500l-.5 4.500-2.500 1-2-3z" fill="#fff" shape-rendering="auto"/><rect x="12" y="6" width="1.500" height="1.500" fill="#0000f0"/>
<path d="M8 11l7 1.500v3.500h-7z" fill="#000" shape-rendering="auto"/><rect x="11" y="12" width="4" height="3" fill="#0000c0"/>
<rect x="1" y="11" width="6" height="4" fill="#fff" stroke="#000" stroke-width=".8"/><rect x="3" y="13" width="1.500" height="1.500" fill="#00d000"/>
<path d="M1 5.500l9 9" stroke="#000" stroke-width="3.400" shape-rendering="auto"/><path d="M2.500 7l7.500 7.500" stroke="#f0e800" stroke-width="1.800" shape-rendering="auto"/><path d="M0.800 5.300l2 2" stroke="#f000a0" stroke-width="2" shape-rendering="auto"/></svg>
<span class="t" style="left:66.73px;top:271px;transform:scaleX(0.965);">Lokale Benutzer und Gruppen</span>
<div style="left:37px;top:293px;width:10px;height:1px;background:repeating-linear-gradient(to right,#808080 0 1px,transparent 1px 2px);background-position:0px 0"></div>
<div style="left:32px;top:289px;width:9px;height:9px;background:#fff;box-shadow:inset 0 0 0 1px #808080"></div>
<div style="left:34px;top:293px;width:5px;height:1px;background:#000"></div>
<div style="left:36px;top:291px;width:1px;height:5px;background:#000"></div>
<svg style="left:47px;top:285px" width="16" height="16" viewBox="0 0 16 16" shape-rendering="crispEdges"><rect x="4" y="1.500" width="11" height="13" fill="#fff"/><rect x="4" y="1" width="11" height="1" fill="#000"/><rect x="14" y="1" width="1.500" height="14" fill="#000"/><rect x="3" y="2" width="1" height="1" fill="#000"/><rect x="3" y="4" width="1" height="1" fill="#000"/><rect x="3" y="6" width="1" height="1" fill="#000"/>
<path d="M6 5l1.500-1.500 1.500 2 2-2.500 1 1.500 1.500-2" fill="none" stroke="#0000f0" stroke-width="1.300" shape-rendering="auto"/><path d="M11 8.500l1-1.500h1.500" fill="none" stroke="#f00000" stroke-width="1.400" shape-rendering="auto"/>
<path d="M6 6l1 3 2.500-2-.5 3 3 .5-2.500 1.500 1.500 2.500-3-1-.5 2.500-1.500-2.200-2.500 1.700.5-3-3-.5 2.500-1.500-1.500-2.500 3 1z" fill="#f0e800" stroke="#000" stroke-width=".9" shape-rendering="auto"/><circle cx="6" cy="11" r="1" fill="#fff" shape-rendering="auto"/></svg>
<span class="t" style="left:66.72px;top:287px;transform:scaleX(0.975);">Leistungsprotokolle und Warnungen</span>
<div style="left:37px;top:309px;width:10px;height:1px;background:repeating-linear-gradient(to right,#808080 0 1px,transparent 1px 2px);background-position:0px 0"></div>
<svg style="left:47px;top:301px" width="16" height="16" viewBox="0 0 16 16" shape-rendering="crispEdges"><rect x="3.500" y="0.500" width="10" height="8.500" fill="#c8c8c8" stroke="#808080" stroke-width="1"/><rect x="13" y="1" width="1.500" height="9" fill="#000"/><rect x="5" y="3" width="6" height="4.500" fill="#0000e0" stroke="#000" stroke-width=".8"/><rect x="6" y="4" width="2" height="1" fill="#00c0ff"/>
<path d="M3 9.500h10l2.500 4h-15z" fill="#fff" stroke="#000" stroke-width=".8" shape-rendering="auto"/><path d="M3 11h9M2 12.500h9" stroke="#000" stroke-width="1" stroke-dasharray="1 1" shape-rendering="auto"/><rect x="1" y="13.500" width="15" height="1.200" fill="#000"/><path d="M11.500 12.500h4v2h-4z" fill="#fff" stroke="#606060" stroke-width=".6" shape-rendering="auto"/></svg>
<span class="t" style="left:67.06px;top:303px;transform:scaleX(0.976);">Geräte-Manager</span>
<div style="left:18px;top:325px;width:10px;height:1px;background:repeating-linear-gradient(to right,#808080 0 1px,transparent 1px 2px);background-position:1px 0"></div>
<div style="left:13px;top:321px;width:9px;height:9px;background:#fff;box-shadow:inset 0 0 0 1px #808080"></div>
<div style="left:15px;top:325px;width:5px;height:1px;background:#000"></div>
<svg style="left:28px;top:317px" width="16" height="16" viewBox="0 0 16 16" shape-rendering="crispEdges"><rect x="1" y="4" width="14" height="11" fill="#e4e4e4"/><rect x="6" y="4" width="9" height="2" fill="#f8f8f8"/><rect x="0" y="6" width="1" height="9" fill="#808080"/>
<rect x="7" y="6" width="8" height="5" fill="#707070"/><rect x="10" y="7" width="2" height="3" fill="#fff"/><rect x="7" y="10" width="7" height="1.500" fill="#000"/><rect x="2" y="9" width="5" height="1" fill="#b0b0b0"/><rect x="2" y="11" width="5" height="1" fill="#b0b0b0"/>
<rect x="1" y="12.500" width="14" height="1" fill="#a0a0a0"/><rect x="15" y="4" width="1" height="11" fill="#000"/><rect x="1" y="14.500" width="15" height="1.500" fill="#000"/>
<circle cx="5" cy="4" r="4" fill="#e8e8e8" stroke="#808080" stroke-width=".7" shape-rendering="auto"/><path d="M5 4L1.200 5.500A4 4 0 0 1 2 1.500z" fill="#00d0e0" shape-rendering="auto"/><path d="M5 4L2 1.500A4 4 0 0 1 4 .1z" fill="#00d000" shape-rendering="auto"/><path d="M5 4L4 .1A4 4 0 0 1 7 .5z" fill="#f0f000" shape-rendering="auto"/><circle cx="5" cy="4.200" r=".9" fill="#000" shape-rendering="auto"/></svg>
<span class="t" style="left:47.62px;top:319px;transform:scaleX(0.975);">Datenspeicher</span>
<div style="left:37px;top:341px;width:10px;height:1px;background:repeating-linear-gradient(to right,#808080 0 1px,transparent 1px 2px);background-position:0px 0"></div>
<div style="left:32px;top:337px;width:9px;height:9px;background:#fff;box-shadow:inset 0 0 0 1px #808080"></div>
<div style="left:34px;top:341px;width:5px;height:1px;background:#000"></div>
<div style="left:36px;top:339px;width:1px;height:5px;background:#000"></div>
<svg style="left:47px;top:333px" width="16" height="16" viewBox="0 0 16 16" shape-rendering="crispEdges"><circle cx="11" cy="4" r="4" fill="#e0e0e0" stroke="#606060" stroke-width=".6" shape-rendering="auto"/><path d="M11 4L8 1.500A4 4 0 0 1 10 .1z" fill="#00d0e0" shape-rendering="auto"/><path d="M11 4L10 .1A4 4 0 0 1 13 .5z" fill="#f0f000" shape-rendering="auto"/><rect x="13" y="6" width="2" height="1" fill="#00d0e0"/>
<circle cx="5" cy="5" r="4" fill="#d8d8d8" stroke="#606060" stroke-width=".6" shape-rendering="auto"/><path d="M5 5L1.200 6.500A4 4 0 0 1 2 2.500z" fill="#00d000" shape-rendering="auto"/><path d="M5 5L2 2.500A4 4 0 0 1 4.500 1z" fill="#00d0e0" shape-rendering="auto"/><path d="M5 5L4.500 1A4 4 0 0 1 7.500 1.800z" fill="#f0f000" shape-rendering="auto"/>
<rect x="0.500" y="8" width="13.500" height="7.500" fill="#a0a0a0" stroke="#404040" stroke-width="1"/><rect x="1" y="8" width="13" height="1" fill="#d0d0d0"/><rect x="2" y="10.500" width="9" height="3.500" fill="#000"/><rect x="4" y="11.500" width="5" height="1.200" fill="#fff"/><rect x="12" y="9" width="2.500" height="5" fill="#000"/><rect x="14" y="7" width="1.500" height="6" fill="#404040"/></svg>
<span class="t" style="left:67.55px;top:335px;transform:scaleX(0.952);">Wechselmedien</span>
<div style="left:37px;top:357px;width:10px;height:1px;background:repeating-linear-gradient(to right,#808080 0 1px,transparent 1px 2px);background-position:0px 0"></div>
<svg style="left:47px;top:349px" width="16" height="16" viewBox="0 0 16 16" shape-rendering="crispEdges"><path d="M1 1l4 1.500 0 2.500 3 1 0 2 3 1v6l-10-3z" fill="#000" shape-rendering="auto"/>
<path d="M1.500 2v10.500l2.500 1v-10.500z" fill="#e80000" shape-rendering="auto"/><path d="M4 3l2.500 .5v3l-2.500-.5z" fill="#f0e800" shape-rendering="auto"/><path d="M4 6.500l3.500 1v3l-3.500-1z" fill="#00c000" shape-rendering="auto"/><path d="M4 10l6 2v2.500l-6-2z" fill="#0000e8" shape-rendering="auto"/><path d="M7.500 8l3 1v3l-3-1z" fill="#00c0c0" shape-rendering="auto"/><path d="M6.500 4l2 .7v3l-2-.7z" fill="#e80000" shape-rendering="auto"/>
<path d="M10 9l2.500-.5v5l-2.500 1.500z" fill="#404040" shape-rendering="auto"/>
<path d="M10.500 0.500l4 4M9.500 3l3.500 3.500" stroke="#e800e8" stroke-width="1.500" shape-rendering="auto"/><path d="M11.500 9.500h4" stroke="#00e0e0" stroke-width="1.500" shape-rendering="auto"/><path d="M5 1l2 1.500" stroke="#f0e800" stroke-width="1.500" shape-rendering="auto"/></svg>
<span class="t" style="left:66.70px;top:351px;">Defragmentierung</span>
<div style="left:37px;top:373px;width:10px;height:1px;background:repeating-linear-gradient(to right,#808080 0 1px,transparent 1px 2px);background-position:0px 0"></div>
<div style="left:66px;top:365px;width:120px;height:16px;background:#d4d0c8"></div>
<svg style="left:47px;top:365px" width="16" height="16" viewBox="0 0 16 16" shape-rendering="crispEdges"><path d="M1 1q1.500-1.500 2.500 0t2.500 0M6.500 0l.5 4M9 .5q1.500-1 1.500 1.500M12 0v4M14.500 0l-1 4" fill="none" stroke="#000" stroke-width="1.300" shape-rendering="auto"/><rect x="3" y="3" width="1.500" height="2.500" fill="#0000e0"/><rect x="9.500" y="3" width="1.500" height="2.500" fill="#e00000"/><rect x="13" y="3" width="1.500" height="2.500" fill="#00a000"/>
<path d="M2.500 6h13l-2 3h-13z" fill="#d8d8d8" stroke="#404040" stroke-width=".7" shape-rendering="auto"/><rect x="0.500" y="9" width="13" height="4" fill="#a0a0a0"/><path d="M13.500 9l2-3v4.500l-2 3z" fill="#404040" shape-rendering="auto"/><rect x="0.500" y="12.500" width="13" height="1.500" fill="#000"/>
<rect x="12" y="7" width="1.500" height="1" fill="#00e000"/><path d="M3 12l3-2.500h2.500l-1 3.500z" fill="#fff" stroke="#000" stroke-width=".8" shape-rendering="auto"/><rect x="7.500" y="10" width="1.500" height="5.500" fill="#f0e800"/><rect x="9" y="10" width="1" height="4" fill="#000"/></svg>
<span class="t" style="left:66.68px;top:367px;transform:scaleX(1.027);">Datenträgerverwaltung</span>
<div style="left:18px;top:389px;width:10px;height:1px;background:repeating-linear-gradient(to right,#808080 0 1px,transparent 1px 2px);background-position:1px 0"></div>
<div style="left:13px;top:385px;width:9px;height:9px;background:#fff;box-shadow:inset 0 0 0 1px #808080"></div>
<div style="left:15px;top:389px;width:5px;height:1px;background:#000"></div>
<div style="left:17px;top:387px;width:1px;height:5px;background:#000"></div>
<svg style="left:28px;top:381px" width="16" height="16" viewBox="0 0 16 16" shape-rendering="crispEdges"><path d="M1.500 2q0-1.500 2-1.500h4q2 0 2 1.500v13h-8z" fill="#d0d0d0" shape-rendering="auto"/><rect x="2" y="1" width="6" height="2" fill="#fff"/><rect x="1" y="2" width="1" height="13" fill="#808080"/><rect x="8.500" y="1.500" width="1.200" height="14" fill="#606060"/><rect x="1" y="15" width="9" height="1" fill="#404040"/><rect x="2.500" y="5" width="5" height="1" fill="#909090"/><rect x="2.500" y="7" width="5" height="1" fill="#909090"/><rect x="4" y="13" width="2" height="1" fill="#f00000"/>
<path d="M11 3.500l1 2.200 2.500-.7-.7 2.500 2.200 1-2.200 1 .7 2.500-2.500-.7-1 2.200-1-2.200-2.500.7.700-2.500-2.200-1 2.200-1-.7-2.500 2.500.7z" fill="#f0e800" stroke="#000" stroke-width=".9" shape-rendering="auto"/><circle cx="11" cy="8.500" r="1.600" fill="#fff" stroke="#000" stroke-width=".6" shape-rendering="auto"/></svg>
<span class="t" style="left:47.61px;top:383px;transform:scaleX(0.989);">Dienste und Anwendungen</span>
</div></div>
<div style="left:6px;top:411px;width:182px;height:16px;background:repeating-conic-gradient(#fff 0% 25%,#d4d0c8 0% 50%) 0 0/2px 2px"></div>
<div style="left:6px;top:411px;width:16px;height:16px;background:#d4d0c8;box-shadow:inset -1px -1px 0 #404040,inset 1px 1px 0 #d4d0c8,inset -2px -2px 0 #808080,inset 2px 2px 0 #fff"></div>
<svg style="left:6px;top:411px" width="16" height="16"><path d="M6 7.5l4-4v8z" fill="#000"/></svg>
<div style="left:22px;top:411px;width:93px;height:16px;background:#d4d0c8;box-shadow:inset -1px -1px 0 #404040,inset 1px 1px 0 #d4d0c8,inset -2px -2px 0 #808080,inset 2px 2px 0 #fff"></div>
<div style="left:172px;top:411px;width:16px;height:16px;background:#d4d0c8;box-shadow:inset -1px -1px 0 #404040,inset 1px 1px 0 #d4d0c8,inset -2px -2px 0 #808080,inset 2px 2px 0 #fff"></div>
<svg style="left:172px;top:411px" width="16" height="16"><path d="M10 7.5l-4-4v8z" fill="#000"/></svg>
<div style="left:193px;top:75px;width:533px;height:354px;background:#d4d0c8;box-shadow:inset 1px 1px 0 #808080,inset -1px -1px 0 #fff,inset 2px 2px 0 #404040,inset -2px -2px 0 #d4d0c8"></div>
<div style="left:195px;top:77px;width:529px;height:134px;background:#fff"></div>
<div style="left:195px;top:77px;width:529px;height:150px;overflow:hidden"><div style="left:-195px;top:-77px;width:760px;height:453px">
<div style="left:195px;top:77px;width:73px;height:17px;background:#d4d0c8;box-shadow:inset -1px -1px 0 #404040,inset 1px 1px 0 #fff,inset -2px -2px 0 #808080,inset 2px 2px 0 #d4d0c8"></div>
<span class="t" style="left:200.55px;top:80px;transform:scaleX(0.916);">Volume</span>
<div style="left:268px;top:77px;width:52px;height:17px;background:#d4d0c8;box-shadow:inset -1px -1px 0 #404040,inset 1px 1px 0 #fff,inset -2px -2px 0 #808080,inset 2px 2px 0 #d4d0c8"></div>
<span class="t" style="left:272.59px;top:80px;transform:scaleX(1.014);">Layout</span>
<div style="left:320px;top:77px;width:36px;height:17px;background:#d4d0c8;box-shadow:inset -1px -1px 0 #404040,inset 1px 1px 0 #fff,inset -2px -2px 0 #808080,inset 2px 2px 0 #d4d0c8"></div>
<span class="t" style="left:325.44px;top:80px;transform:scaleX(1.029);">Typ</span>
<div style="left:356px;top:77px;width:71px;height:17px;background:#d4d0c8;box-shadow:inset -1px -1px 0 #404040,inset 1px 1px 0 #fff,inset -2px -2px 0 #808080,inset 2px 2px 0 #d4d0c8"></div>
<span class="t" style="left:361.01px;top:80px;transform:scaleX(0.990);">Dateisystem</span>
<div style="left:427px;top:77px;width:144px;height:17px;background:#d4d0c8;box-shadow:inset -1px -1px 0 #404040,inset 1px 1px 0 #fff,inset -2px -2px 0 #808080,inset 2px 2px 0 #d4d0c8"></div>
<span class="t" style="left:432.20px;top:80px;">Status</span>
<div style="left:571px;top:77px;width:62px;height:17px;background:#d4d0c8;box-shadow:inset -1px -1px 0 #404040,inset 1px 1px 0 #fff,inset -2px -2px 0 #808080,inset 2px 2px 0 #d4d0c8"></div>
<span class="t" style="left:575.71px;top:80px;transform:scaleX(0.984);">Kapazität</span>
<div style="left:633px;top:77px;width:84px;height:17px;background:#d4d0c8;box-shadow:inset -1px -1px 0 #404040,inset 1px 1px 0 #fff,inset -2px -2px 0 #808080,inset 2px 2px 0 #d4d0c8"></div>
<span class="t" style="left:637.94px;top:80px;transform:scaleX(0.955);">Freier Speicher</span>
<div style="left:717px;top:77px;width:43px;height:17px;background:#d4d0c8;box-shadow:inset -1px -1px 0 #404040,inset 1px 1px 0 #fff,inset -2px -2px 0 #808080,inset 2px 2px 0 #d4d0c8"></div>
<span class="t" style="left:722.12px;top:80px;transform:scaleX(0.950);">% frei</span>
<svg style="left:197px;top:94px" width="16" height="16" viewBox="0 0 16 16" shape-rendering="crispEdges"><rect x="0" y="3" width="16" height="9" rx="2.500" fill="#000" shape-rendering="auto"/>
<rect x="0.500" y="3" width="14" height="8" rx="1.800" fill="#d0d0d0" shape-rendering="auto"/>
<rect x="2" y="3" width="12" height="1.500" fill="#808080"/>
<rect x="1" y="5" width="12.500" height="1" fill="#f4f4f4"/>
<rect x="1.500" y="8" width="11.500" height="1" fill="#808080"/>
<rect x="2" y="9" width="11" height="1.500" fill="#b8b8b8"/>
<rect x="11" y="6" width="1" height="1" fill="#00a000"/></svg>
<span class="t" style="left:217.04px;top:97px;transform:scaleX(1.089);">(E:)</span>
<span class="t" style="left:272.58px;top:97px;transform:scaleX(1.025);">Partition</span>
<span class="t" style="left:324.88px;top:97px;transform:scaleX(0.910);">Basis</span>
<span class="t" style="left:361.11px;top:97px;transform:scaleX(0.874);">NTFS</span>
<span class="t" style="left:431.78px;top:97px;transform:scaleX(1.021);">Fehlerfrei (Aktiv)</span>
<span class="t" style="left:576.09px;top:97px;transform:scaleX(0.936);">235 MB</span>
<span class="t" style="left:638.35px;top:97px;transform:scaleX(0.909);">89 MB</span>
<span class="t" style="left:721.62px;top:97px;transform:scaleX(0.950);">37 %</span>
<svg style="left:197px;top:111px" width="16" height="16" viewBox="0 0 16 16" shape-rendering="crispEdges"><rect x="0" y="3" width="16" height="9" rx="2.500" fill="#000" shape-rendering="auto"/>
<rect x="0.500" y="3" width="14" height="8" rx="1.800" fill="#d0d0d0" shape-rendering="auto"/>
<rect x="2" y="3" width="12" height="1.500" fill="#808080"/>
<rect x="1" y="5" width="12.500" height="1" fill="#f4f4f4"/>
<rect x="1.500" y="8" width="11.500" height="1" fill="#808080"/>
<rect x="2" y="9" width="11" height="1.500" fill="#b8b8b8"/>
<rect x="11" y="6" width="1" height="1" fill="#00a000"/></svg>
<span class="t" style="left:213.74px;top:114px;transform:scaleX(0.961);">DATA</span>
<span class="t" style="left:272.58px;top:114px;transform:scaleX(1.025);">Partition</span>
<span class="t" style="left:324.88px;top:114px;transform:scaleX(0.910);">Basis</span>
<span class="t" style="left:361.11px;top:114px;transform:scaleX(0.874);">NTFS</span>
<span class="t" style="left:431.78px;top:114px;transform:scaleX(1.022);">Fehlerfrei</span>
<span class="t" style="left:576.36px;top:114px;transform:scaleX(0.957);">465,75 GB</span>
<span class="t" style="left:638.28px;top:114px;transform:scaleX(0.954);">265,84 GB</span>
<span class="t" style="left:721.57px;top:114px;transform:scaleX(0.950);">57 %</span>
<svg style="left:197px;top:128px" width="16" height="16" viewBox="0 0 16 16" shape-rendering="crispEdges"><rect x="0" y="3" width="16" height="9" rx="2.500" fill="#000" shape-rendering="auto"/>
<rect x="0.500" y="3" width="14" height="8" rx="1.800" fill="#d0d0d0" shape-rendering="auto"/>
<rect x="2" y="3" width="12" height="1.500" fill="#808080"/>
<rect x="1" y="5" width="12.500" height="1" fill="#f4f4f4"/>
<rect x="1.500" y="8" width="11.500" height="1" fill="#808080"/>
<rect x="2" y="9" width="11" height="1.500" fill="#b8b8b8"/>
<rect x="11" y="6" width="1" height="1" fill="#00a000"/></svg>
<span class="t" style="left:213.74px;top:131px;transform:scaleX(0.961);">DATA</span>
<span class="t" style="left:272.58px;top:131px;transform:scaleX(1.025);">Partition</span>
<span class="t" style="left:324.88px;top:131px;transform:scaleX(0.910);">Basis</span>
<span class="t" style="left:361.11px;top:131px;transform:scaleX(0.874);">NTFS</span>
<span class="t" style="left:431.78px;top:131px;transform:scaleX(1.022);">Fehlerfrei</span>
<span class="t" style="left:576.12px;top:131px;transform:scaleX(0.961);">931,50 GB</span>
<span class="t" style="left:637.98px;top:131px;transform:scaleX(0.960);">106,22 GB</span>
<span class="t" style="left:721.19px;top:131px;transform:scaleX(0.950);">11 %</span>
<svg style="left:197px;top:145px" width="16" height="16" viewBox="0 0 16 16" shape-rendering="crispEdges"><rect x="0" y="3" width="16" height="9" rx="2.500" fill="#000" shape-rendering="auto"/>
<rect x="0.500" y="3" width="14" height="8" rx="1.800" fill="#d0d0d0" shape-rendering="auto"/>
<rect x="2" y="3" width="12" height="1.500" fill="#808080"/>
<rect x="1" y="5" width="12.500" height="1" fill="#f4f4f4"/>
<rect x="1.500" y="8" width="11.500" height="1" fill="#808080"/>
<rect x="2" y="9" width="11" height="1.500" fill="#b8b8b8"/>
<rect x="11" y="6" width="1" height="1" fill="#00a000"/></svg>
<span class="t" style="left:213.74px;top:148px;transform:scaleX(0.961);">DATA</span>
<span class="t" style="left:272.58px;top:148px;transform:scaleX(1.025);">Partition</span>
<span class="t" style="left:324.88px;top:148px;transform:scaleX(0.910);">Basis</span>
<span class="t" style="left:361.11px;top:148px;transform:scaleX(0.874);">NTFS</span>
<span class="t" style="left:431.78px;top:148px;transform:scaleX(1.022);">Fehlerfrei</span>
<span class="t" style="left:576.12px;top:148px;transform:scaleX(0.961);">931,50 GB</span>
<span class="t" style="left:638.32px;top:148px;transform:scaleX(0.958);">84,99 GB</span>
<span class="t" style="left:721.52px;top:148px;transform:scaleX(0.950);">9 %</span>
<svg style="left:197px;top:162px" width="16" height="16" viewBox="0 0 16 16" shape-rendering="crispEdges"><rect x="0" y="3" width="16" height="9" rx="2.500" fill="#000" shape-rendering="auto"/>
<rect x="0.500" y="3" width="14" height="8" rx="1.800" fill="#d0d0d0" shape-rendering="auto"/>
<rect x="2" y="3" width="12" height="1.500" fill="#808080"/>
<rect x="1" y="5" width="12.500" height="1" fill="#f4f4f4"/>
<rect x="1.500" y="8" width="11.500" height="1" fill="#808080"/>
<rect x="2" y="9" width="11" height="1.500" fill="#b8b8b8"/>
<rect x="11" y="6" width="1" height="1" fill="#00a000"/></svg>
<span class="t" style="left:213.67px;top:165px;transform:scaleX(1.030);">DATA (D:)</span>
<span class="t" style="left:272.58px;top:165px;transform:scaleX(1.025);">Partition</span>
<span class="t" style="left:324.88px;top:165px;transform:scaleX(0.910);">Basis</span>
<span class="t" style="left:361.11px;top:165px;transform:scaleX(0.874);">NTFS</span>
<span class="t" style="left:431.78px;top:165px;transform:scaleX(1.022);">Fehlerfrei</span>
<span class="t" style="left:576.11px;top:165px;transform:scaleX(0.976);">911,50 GB</span>
<span class="t" style="left:638.32px;top:165px;transform:scaleX(0.953);">907,84 GB</span>
<span class="t" style="left:721.52px;top:165px;transform:scaleX(0.950);">99 %</span>
<svg style="left:197px;top:179px" width="16" height="16" viewBox="0 0 16 16" shape-rendering="crispEdges"><rect x="0" y="3" width="16" height="9" rx="2.500" fill="#000" shape-rendering="auto"/>
<rect x="0.500" y="3" width="14" height="8" rx="1.800" fill="#d0d0d0" shape-rendering="auto"/>
<rect x="2" y="3" width="12" height="1.500" fill="#808080"/>
<rect x="1" y="5" width="12.500" height="1" fill="#f4f4f4"/>
<rect x="1.500" y="8" width="11.500" height="1" fill="#808080"/>
<rect x="2" y="9" width="11" height="1.500" fill="#b8b8b8"/>
<rect x="11" y="6" width="1" height="1" fill="#00a000"/></svg>
<span class="t" style="left:214.13px;top:182px;transform:scaleX(0.942);">SYS (C:)</span>
<span class="t" style="left:272.58px;top:182px;transform:scaleX(1.025);">Partition</span>
<span class="t" style="left:324.88px;top:182px;transform:scaleX(0.910);">Basis</span>
<span class="t" style="left:361.11px;top:182px;transform:scaleX(0.874);">NTFS</span>
<span class="t" style="left:431.80px;top:182px;transform:scaleX(1.005);">Fehlerfrei (Systempartition)</span>
<span class="t" style="left:576.08px;top:182px;transform:scaleX(0.946);">20,00 GB</span>
<span class="t" style="left:638.33px;top:182px;transform:scaleX(0.945);">8,53 GB</span>
<span class="t" style="left:721.76px;top:182px;transform:scaleX(0.950);">42 %</span>
</div></div>
<svg style="left:190px;top:90px" width="70" height="24"><ellipse cx="30.8" cy="11.7" rx="27" ry="6.8" fill="none" stroke="#f00000" stroke-width="1.250"/></svg>
<div style="left:195px;top:211px;width:529px;height:16px;background:repeating-conic-gradient(#fff 0% 25%,#d4d0c8 0% 50%) 0 0/2px 2px"></div>
<div style="left:195px;top:211px;width:16px;height:16px;background:#d4d0c8;box-shadow:inset -1px -1px 0 #404040,inset 1px 1px 0 #d4d0c8,inset -2px -2px 0 #808080,inset 2px 2px 0 #fff"></div>
<svg style="left:195px;top:211px" width="16" height="16"><path d="M6 7.5l4-4v8z" fill="#000"/></svg>
<div style="left:211px;top:211px;width:364px;height:16px;background:#d4d0c8;box-shadow:inset -1px -1px 0 #404040,inset 1px 1px 0 #d4d0c8,inset -2px -2px 0 #808080,inset 2px 2px 0 #fff"></div>
<div style="left:708px;top:211px;width:16px;height:16px;background:#d4d0c8;box-shadow:inset -1px -1px 0 #404040,inset 1px 1px 0 #d4d0c8,inset -2px -2px 0 #808080,inset 2px 2px 0 #fff"></div>
<svg style="left:708px;top:211px" width="16" height="16"><path d="M10 7.5l-4-4v8z" fill="#000"/></svg>
<div style="left:195px;top:227px;width:529px;height:1px;background:#e6e3dd"></div>
<div style="left:195px;top:228px;width:529px;height:1px;background:#fff"></div>
<div style="left:195px;top:231px;width:529px;height:1px;background:#e2dfd8"></div>
<div style="left:195px;top:234px;width:529px;height:1px;background:#404040"></div>
<div style="left:197px;top:239px;width:119px;height:71px;box-shadow:inset 1px 1px 0 #fff,inset 0 -1px 0 #808080"></div>
<div style="left:316px;top:239px;width:1px;height:71px;background:#fff"></div>
<div style="left:317px;top:239px;width:1px;height:71px;background:#e6e4df"></div>
<div style="left:318px;top:239px;width:1px;height:71px;background:#808080"></div>
<svg style="left:204px;top:245px" width="17" height="12" viewBox="0 0 17 12" shape-rendering="crispEdges"><path d="M3 1h14l-2 2h-14z" fill="#b0b0b0" shape-rendering="auto"/>
<rect x="1" y="2.500" width="14" height="6.500" fill="#8c8c8c"/>
<path d="M14.500 3L17 1v6l-2.500 2.500z" fill="#484848" shape-rendering="auto"/>
<rect x="10" y="8.500" width="6" height="1.300" fill="#000"/>
<path d="M1 8q2.500-.5 3.500-2.500t3.500-1" fill="none" stroke="#000" stroke-width="1.500" shape-rendering="auto"/>
<path d="M3.500 9.500l2.500-3h2.500l-.5 3.500z" fill="#e8e8e8" stroke="#000" stroke-width=".7" shape-rendering="auto"/>
<path d="M0.800 8.500q3 2.500 7 2" fill="none" stroke="#000" stroke-width="1.600" shape-rendering="auto"/>
<rect x="12" y="4" width="1.500" height="1" fill="#00f000"/>
<rect x="8.700" y="6" width="1.400" height="5.500" fill="#f0e800"/><rect x="10" y="6" width="1" height="3" fill="#000"/></svg>
<span class="t" style="left:221.15px;top:247px;font-weight:bold;-webkit-text-stroke:.3px;transform:scaleX(1.137);">Datenträger 3</span>
<span class="t" style="left:202.98px;top:260px;transform:scaleX(0.910);">Basis</span>
<span class="t" style="left:203.56px;top:273px;transform:scaleX(0.958);">465,75 GB</span>
<span class="t" style="left:203.32px;top:286px;transform:scaleX(0.953);">Online</span>
<div style="left:319px;top:239px;width:371px;height:71px;box-shadow:inset 0 1px 0 #fff,inset -1px -1px 0 #808080"></div>
<div style="left:320px;top:243px;width:366px;height:63px;box-shadow:inset 1px 1px 0 #fff,inset -1px -1px 0 #808080"></div>
<div style="left:321px;top:244px;width:363px;height:11px;background:#000080"></div>
<div style="left:321px;top:255px;width:363px;height:1px;background:#808080"></div>
<div style="left:321px;top:256px;width:363px;height:1px;background:#fff"></div>
<div style="left:321px;top:256px;width:1px;height:48px;background:#eceae5"></div>
<div style="left:324px;top:258px;width:358px;height:44px;background:#fff;box-shadow:inset 1px 1px 0 #808080"></div>
<span class="t" style="left:326.99px;top:262px;font-weight:bold;-webkit-text-stroke:.3px;transform:scaleX(1.081);">DATA</span>
<span class="t" style="left:327.57px;top:275px;transform:scaleX(0.917);">465,75 GB NTFS</span>
<span class="t" style="left:326.88px;top:288px;transform:scaleX(1.022);">Fehlerfrei</span>
<div style="left:197px;top:310px;width:119px;height:71px;box-shadow:inset 1px 1px 0 #fff,inset 0 -1px 0 #808080"></div>
<div style="left:316px;top:310px;width:1px;height:71px;background:#fff"></div>
<div style="left:317px;top:310px;width:1px;height:71px;background:#e6e4df"></div>
<div style="left:318px;top:310px;width:1px;height:71px;background:#808080"></div>
<svg style="left:204px;top:316px" width="17" height="12" viewBox="0 0 17 12" shape-rendering="crispEdges"><path d="M3 1h14l-2 2h-14z" fill="#b0b0b0" shape-rendering="auto"/>
<rect x="1" y="2.500" width="14" height="6.500" fill="#8c8c8c"/>
<path d="M14.500 3L17 1v6l-2.500 2.500z" fill="#484848" shape-rendering="auto"/>
<rect x="10" y="8.500" width="6" height="1.300" fill="#000"/>
<path d="M1 8q2.500-.5 3.500-2.500t3.500-1" fill="none" stroke="#000" stroke-width="1.500" shape-rendering="auto"/>
<path d="M3.500 9.500l2.500-3h2.500l-.5 3.500z" fill="#e8e8e8" stroke="#000" stroke-width=".7" shape-rendering="auto"/>
<path d="M0.800 8.500q3 2.500 7 2" fill="none" stroke="#000" stroke-width="1.600" shape-rendering="auto"/>
<rect x="12" y="4" width="1.500" height="1" fill="#00f000"/>
<rect x="8.700" y="6" width="1.400" height="5.500" fill="#f0e800"/><rect x="10" y="6" width="1" height="3" fill="#000"/></svg>
<span class="t" style="left:221.15px;top:318px;font-weight:bold;-webkit-text-stroke:.3px;transform:scaleX(1.131);">Datenträger 4</span>
<span class="t" style="left:202.98px;top:331px;transform:scaleX(0.910);">Basis</span>
<span class="t" style="left:203.28px;top:344px;transform:scaleX(0.944);">235 MB</span>
<span class="t" style="left:203.32px;top:357px;transform:scaleX(0.953);">Online</span>
<div style="left:319px;top:310px;width:160px;height:71px;box-shadow:inset 0 1px 0 #fff,inset -1px -1px 0 #808080"></div>
<div style="left:320px;top:314px;width:155px;height:63px;box-shadow:inset 1px 1px 0 #fff,inset -1px -1px 0 #808080"></div>
<div style="left:321px;top:315px;width:152px;height:11px;background:#000080"></div>
<div style="left:321px;top:326px;width:152px;height:1px;background:#808080"></div>
<div style="left:321px;top:327px;width:152px;height:1px;background:#fff"></div>
<div style="left:321px;top:327px;width:1px;height:48px;background:#eceae5"></div>
<div style="left:324px;top:329px;width:147px;height:44px;background:#fff;box-shadow:inset 1px 1px 0 #808080"></div>
<span class="t" style="left:332.69px;top:333px;font-weight:bold;-webkit-text-stroke:.3px;transform:scaleX(1.110);">(E:)</span>
<span class="t" style="left:327.30px;top:346px;transform:scaleX(0.906);">235 MB NTFS</span>
<span class="t" style="left:326.88px;top:359px;transform:scaleX(1.021);">Fehlerfrei (Aktiv)</span>
<svg style="left:195px;top:300px" width="125" height="52"><ellipse cx="60.600" cy="26" rx="56.300" ry="21.200" fill="none" stroke="#f00000" stroke-width="1.250"/></svg>
<div style="left:708px;top:235px;width:16px;height:172px;background:repeating-conic-gradient(#fff 0% 25%,#d4d0c8 0% 50%) 0 0/2px 2px"></div>
<div style="left:708px;top:235px;width:16px;height:16px;background:#d4d0c8;box-shadow:inset -1px -1px 0 #404040,inset 1px 1px 0 #d4d0c8,inset -2px -2px 0 #808080,inset 2px 2px 0 #fff"></div>
<svg style="left:708px;top:235px" width="16" height="16"><path d="M4 9h7l-3.5-3.5z" fill="#000"/></svg>
<div style="left:708px;top:321px;width:16px;height:70px;background:#d4d0c8;box-shadow:inset -1px -1px 0 #404040,inset 1px 1px 0 #d4d0c8,inset -2px -2px 0 #808080,inset 2px 2px 0 #fff"></div>
<div style="left:708px;top:391px;width:16px;height:16px;background:#d4d0c8;box-shadow:inset -1px -1px 0 #404040,inset 1px 1px 0 #d4d0c8,inset -2px -2px 0 #808080,inset 2px 2px 0 #fff"></div>
<svg style="left:708px;top:391px" width="16" height="16"><path d="M4 6h7l-3.5 3.5z" fill="#000"/></svg>
<div style="left:195px;top:407px;width:529px;height:20px;box-shadow:inset 1px 1px 0 #fff,inset -1px -1px 0 #808080"></div>
<div style="left:200px;top:410px;width:12px;height:14px;background:#000080;box-shadow:inset 1px 1px 0 #808080,inset -1px -1px 0 #fff"></div>
<span class="t" style="left:215.65px;top:410px;transform:scaleX(0.940);">Primäre Partition</span>
<div style="left:4px;top:431px;width:503px;height:18px;box-shadow:inset 1px 1px 0 #808080,inset -1px -1px 0 #fff"></div>
<div style="left:508px;top:431px;width:131px;height:18px;box-shadow:inset 1px 1px 0 #808080,inset -1px -1px 0 #fff"></div>
<div style="left:640px;top:431px;width:84px;height:18px;box-shadow:inset 1px 1px 0 #808080,inset -1px -1px 0 #fff"></div>
</body></html>
